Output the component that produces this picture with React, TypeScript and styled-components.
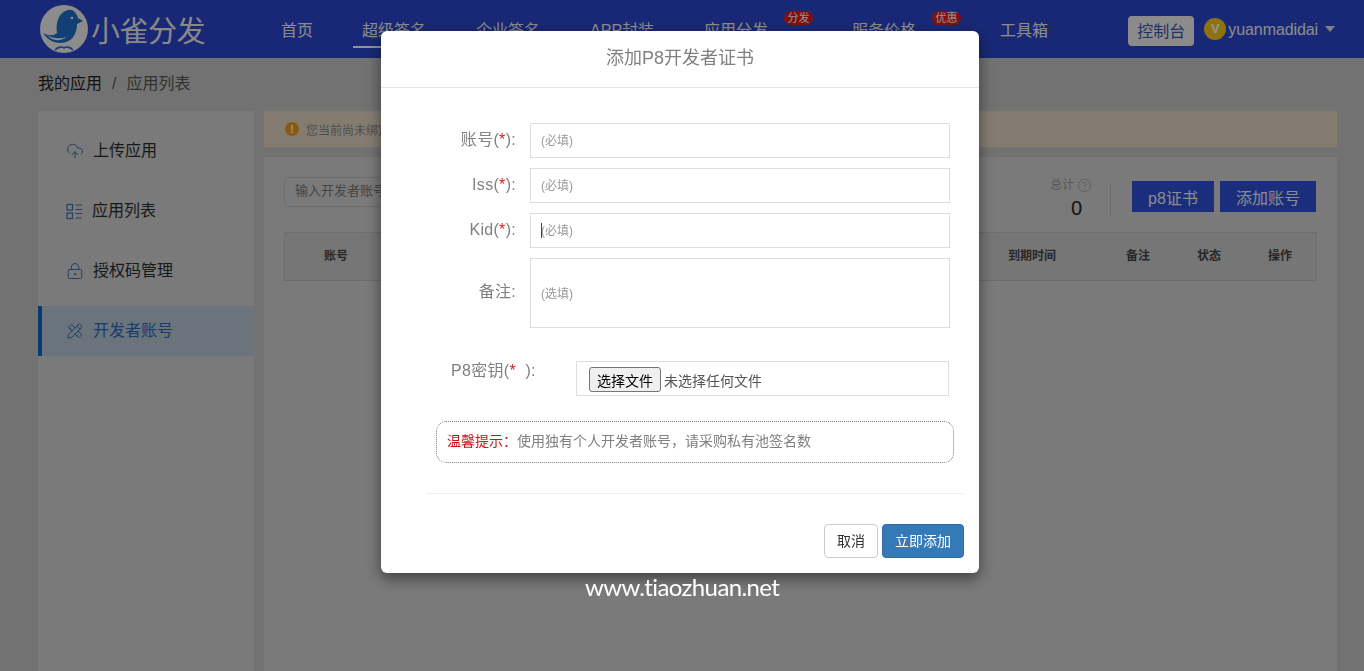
import * as React from 'react';
import styled, { createGlobalStyle } from 'styled-components';
import { CloudUpload, LockKeyhole, CircleHelp } from 'lucide-react';
import { TbTools } from 'react-icons/tb';

const sans = `"Liberation Sans", "Noto Sans CJK SC", sans-serif`;

const GlobalStyle = createGlobalStyle`
  html, body {
    margin: 0;
    height: 100%;
    overflow: hidden;
    background: #c4c4c4;
    font-family: ${sans};
  }
  * { box-sizing: border-box; }
`;

const Header = styled.header`
  display: flex;
  align-items: center;
  height: 58px;
  padding: 0 29px 0 40px;
  background: #2b46cc;
  color: #fff;
`;

const Logo = styled.div`
  display: flex;
  align-items: center;
  gap: 3px;
  width: 241px;
`;

const LogoText = styled.span`
  font-size: 29px;
  letter-spacing: -0.5px;
  color: #eaeaea;
`;

const Nav = styled.nav`
  display: flex;
  align-items: center;
  height: 100%;
  flex: 1;
`;

const NavItem = styled.a<{ $gap: number; $active?: boolean }>`
  position: relative;
  height: 30px;
  margin: 4px -9px 0 ${(p) => p.$gap - 9}px;
  padding: 0 9px;
  font-size: 16px;
  line-height: 30px;
  color: #f2f2f2;
  box-shadow: ${(p) => (p.$active ? '0 2px 0 #fff' : 'none')};
`;

const NavBadge = styled.span`
  position: absolute;
  top: -5px;
  right: -36px;
  width: 29px;
  height: 14px;
  border-radius: 7px;
  background: #dc1c1c;
  color: #fff;
  font-size: 11px;
  line-height: 14px;
  text-align: center;
`;

const ConsoleButton = styled.button`
  width: 66px;
  height: 30px;
  margin-top: 3px;
  padding: 0 0 2px;
  border: 0;
  border-radius: 4px;
  background: #f0f0f0;
  color: #3d50a8;
  font: 16px ${sans};
`;

const UserBox = styled.div`
  display: flex;
  align-items: center;
  margin-left: 10px;
  font-size: 16px;
  line-height: 22px;
  color: #f0f0f0;
`;

const Avatar = styled.span`
  display: flex;
  align-items: center;
  justify-content: center;
  width: 22px;
  height: 22px;
  margin-right: 2px;
  border-radius: 50%;
  background: #f5c518;
  color: #fff;
  font-size: 13px;
  font-weight: 700;
`;

const UserName = styled.span`
  padding-top: 2px;
  letter-spacing: -0.1px;
`;

const Caret = styled.span`
  width: 0;
  height: 0;
  margin-left: 7px;
  border-left: 5.5px solid transparent;
  border-right: 5.5px solid transparent;
  border-top: 6px solid #ddd;
`;

const Crumbs = styled.div`
  display: flex;
  align-items: center;
  gap: 10px;
  height: 53px;
  padding: 0 0 2px 38px;
  font-size: 16px;
  line-height: 22px;
  color: #555;
`;

const CrumbRoot = styled.span`
  color: #222;
`;

const Main = styled.main`
  display: flex;
  gap: 10px;
  height: 560px;
  padding: 0 27px 0 38px;
`;

const Sidebar = styled.aside`
  display: flex;
  flex-direction: column;
  gap: 10px;
  width: 216px;
  padding-top: 15px;
  background: #d2d2d2;
`;

const SideItem = styled.div<{ $active?: boolean }>`
  display: flex;
  align-items: center;
  gap: 9px;
  height: 50px;
  padding-left: ${(p) => (p.$active ? '24px' : '28px')};
  font-size: 16px;
  line-height: 22px;
  color: ${(p) => (p.$active ? '#2a69b8' : '#2c2c2c')};
  background: ${(p) => (p.$active ? '#b8c6d8' : 'transparent')};
  border-left: ${(p) => (p.$active ? '4px solid #0f62c4' : '0')};
  svg { color: #3f6da8; flex: none; }
`;

const Content = styled.section`
  display: flex;
  flex-direction: column;
  gap: 10px;
  flex: 1;
`;

const Notice = styled.div`
  display: flex;
  align-items: center;
  gap: 7px;
  height: 36px;
  padding-left: 21px;
  background: #e4d6c2;
  color: #888;
  font-size: 12px;
`;

const NoticeDot = styled.span`
  width: 14px;
  height: 14px;
  border-radius: 50%;
  background: #ec9a1e;
  color: #fff;
  font-size: 11px;
  font-weight: 700;
  line-height: 14px;
  text-align: center;
`;

const Card = styled.div`
  flex: 1;
  padding: 20px;
  background: #d2d2d2;
`;

const Toolbar = styled.div`
  display: flex;
  justify-content: space-between;
  height: 55px;
`;

const SearchBox = styled.div`
  width: 220px;
  height: 30px;
  padding-left: 10px;
  border: 1px solid #bdbdbd;
  border-radius: 4px;
  font-size: 13px;
  line-height: 25px;
  color: #777;
`;

const ToolbarRight = styled.div`
  display: flex;
  align-items: flex-start;
`;

const Stat = styled.div`
  display: flex;
  flex-direction: column;
  align-items: flex-end;
  gap: 3px;
  color: #999;
  font-size: 12px;
  line-height: 16px;
`;

const StatLabel = styled.span`
  display: flex;
  align-items: center;
  gap: 3px;
`;

const StatValue = styled.span`
  margin-right: 10px;
  font-size: 20px;
  line-height: 24px;
  color: #222;
`;

const Divider = styled.span`
  width: 1px;
  height: 32px;
  margin: 7px 21px 0 18px;
  background: #c0c0c0;
`;

const BlueButton = styled.button<{ $width: number }>`
  width: ${(p) => p.$width}px;
  height: 31px;
  margin: 4px 6px 0 0;
  padding: 0;
  border: 0;
  background: #2f4fd8;
  color: #f0f0f0;
  font: 16px ${sans};
  &:last-child { margin-right: 1px; }
`;

const TableHead = styled.div`
  display: grid;
  grid-template-columns: 102px 1fr 140px 72px 70px 72px;
  height: 49px;
  padding-bottom: 1px;
  align-items: center;
  border: 1px solid #bcbcbc;
  background: #cccccc;
  color: #444;
  font-size: 12px;
  line-height: 16px;
  font-weight: 700;
  text-align: center;
`;

const Overlay = styled.div`
  position: fixed;
  inset: 0;
  background: rgba(0, 0, 0, 0.42);
  padding: 31px 0 0 381px;
`;

const Modal = styled.div`
  width: 598px;
  height: 542px;
  border-radius: 6px;
  background: #fff;
  box-shadow: 0 5px 15px rgba(0, 0, 0, 0.5);
`;

const ModalTitle = styled.h4`
  height: 57px;
  margin: 0;
  border-bottom: 1px solid #e5e5e5;
  font-size: 18px;
  font-weight: 400;
  line-height: 54px;
  text-align: center;
  color: #808080;
`;

const ModalBody = styled.div`
  padding: 35px 15px 15px 45px;
`;

const Row = styled.div`
  position: relative;
  display: flex;
  align-items: center;
  margin-bottom: 10px;
`;

const RowLabel = styled.label`
  width: 90px;
  margin-right: 14px;
  padding-bottom: 2px;
  text-align: right;
  font-size: 16px;
  line-height: 20px;
  letter-spacing: 0.3px;
  color: #808080;
`;

const Star = styled.span`
  color: #d62020;
`;

const TextInput = styled.input`
  width: 420px;
  height: 35px;
  padding: 0 10px;
  border: 1px solid #ddd;
  outline: none;
  font: 12px ${sans};
  &::placeholder { color: #999; }
`;

const InputCaret = styled.span`
  position: absolute;
  left: 115px;
  top: 10px;
  width: 1px;
  height: 15px;
  background: #444;
`;

const TextArea = styled.textarea`
  display: block;
  width: 420px;
  height: 70px;
  padding: 25px 10px 0;
  border: 1px solid #ddd;
  outline: none;
  resize: none;
  font: 12px ${sans};
  &::placeholder { color: #999; }
`;

const FileRow = styled.div`
  display: flex;
  align-items: flex-start;
  margin: 33px 0 0 25px;
`;

const FileLabel = styled.span`
  width: 125px;
  font-size: 16px;
  line-height: 20px;
  letter-spacing: 0.3px;
  color: #808080;
`;

const FileBox = styled.div`
  display: flex;
  align-items: center;
  gap: 3px;
  width: 373px;
  height: 35px;
  padding: 2px 0 0 12px;
  border: 1px solid #ddd;
  font-size: 14px;
  color: #555;
`;

const FileButton = styled.button`
  width: 72px;
  height: 25px;
  padding: 0;
  border: 1px solid #767676;
  border-radius: 3px;
  background: #efefef;
  color: #000;
  font: 14px ${sans};
`;

const Tip = styled.div`
  width: 518px;
  height: 42px;
  margin: 25px 0 0 10px;
  padding-left: 10px;
  border: 1px dotted #777;
  border-radius: 10px;
  font-size: 14px;
  line-height: 39px;
  color: #808080;
`;

const TipHead = styled.span`
  color: #c8161d;
`;

const Rule = styled.hr`
  margin: 30px 0;
  border: 0;
  border-top: 1px solid #eee;
`;

const Footer = styled.div`
  display: flex;
  justify-content: flex-end;
  gap: 4px;
`;

const CancelButton = styled.button`
  width: 54px;
  height: 34px;
  padding: 0 0 2px;
  border: 1px solid #ccc;
  border-radius: 4px;
  background: #fff;
  color: #333;
  font: 14px ${sans};
`;

const SubmitButton = styled.button`
  width: 82px;
  height: 34px;
  padding: 0 0 2px;
  border: 1px solid #2e6da4;
  border-radius: 4px;
  background: #337ab7;
  color: #fff;
  font: 14px ${sans};
`;

const Watermark = styled.div`
  position: absolute;
  left: 585px;
  top: 572px;
  font: 24px "Lato", sans-serif;
  letter-spacing: -0.6px;
  line-height: 30px;
  color: #fff;
`;

const BirdLogo = () => (
  <svg width="48" height="48" viewBox="0 0 48 48">
    <circle cx="24" cy="24" r="24" fill="#f2f2f2" />
    <path
      d="M43 16l-6 3C37 30 31 38 20 38 13 38 7 34 3 28c5 3 10 3 14 0C16 20 17 8 28 5c5-1 8 2 10 8z"
      fill="#1f6fc8"
    />
    <path d="M7 30c6 4 13 4 20 2-6 4-14 5-20-2z" fill="#f2f2f2" />
    <path d="M15 45c3-3 7-4 9-2 2-2 6-1 9 2" fill="none" stroke="#1f6fc8" strokeWidth="1.6" />
    <circle cx="32" cy="13" r="1.3" fill="#f2f2f2" />
  </svg>
);

const ListIcon = () => (
  <svg width="17" height="17" viewBox="0 0 17 17" fill="none" stroke="currentColor" strokeWidth="1.2">
    <rect x="1" y="1.5" width="5.5" height="5.5" />
    <rect x="1" y="10" width="5.5" height="5.5" />
    <path d="M9.5 2h6.5M9.5 6.5h6.5M9.5 10.5h6.5M9.5 15h6.5" />
  </svg>
);

const navItems = [
  { label: '首页', gap: 0 },
  { label: '超级签名', gap: 49, active: true },
  { label: '企业签名', gap: 50 },
  { label: 'APP封装', gap: 50 },
  { label: '应用分发', gap: 50, badge: '分发' },
  { label: '服务价格', gap: 84, badge: '优惠' },
  { label: '工具箱', gap: 84 },
];

const fields = [
  { label: '账号', name: 'account' },
  { label: 'Iss', name: 'iss' },
  { label: 'Kid', name: 'kid', focus: true },
];

export default function App(): React.JSX.Element {
  return (
    <>
      <GlobalStyle />
      <Header>
        <Logo>
          <BirdLogo />
          <LogoText>小雀分发</LogoText>
        </Logo>
        <Nav>
          {navItems.map((item) => (
            <NavItem key={item.label} $gap={item.gap} $active={item.active}>
              {item.label}
              {item.badge && <NavBadge>{item.badge}</NavBadge>}
            </NavItem>
          ))}
        </Nav>
        <ConsoleButton>控制台</ConsoleButton>
        <UserBox>
          <Avatar>V</Avatar>
          <UserName>yuanmadidai</UserName>
          <Caret />
        </UserBox>
      </Header>
      <Crumbs>
        <CrumbRoot>我的应用</CrumbRoot>
        <span>/</span>
        <span>应用列表</span>
      </Crumbs>
      <Main>
        <Sidebar>
          <SideItem><CloudUpload size={18} strokeWidth={1.3} />上传应用</SideItem>
          <SideItem><ListIcon />应用列表</SideItem>
          <SideItem><LockKeyhole size={18} strokeWidth={1.3} />授权码管理</SideItem>
          <SideItem $active><TbTools size={18} strokeWidth={1.3} />开发者账号</SideItem>
        </Sidebar>
        <Content>
          <Notice>
            <NoticeDot>!</NoticeDot>
            您当前尚未绑定开发者账号
          </Notice>
          <Card>
            <Toolbar>
              <SearchBox>输入开发者账号</SearchBox>
              <ToolbarRight>
                <Stat>
                  <StatLabel>总计 <CircleHelp size={15} strokeWidth={1.2} /></StatLabel>
                  <StatValue>0</StatValue>
                </Stat>
                <Divider />
                <BlueButton $width={82}>p8证书</BlueButton>
                <BlueButton $width={96}>添加账号</BlueButton>
              </ToolbarRight>
            </Toolbar>
            <TableHead>
              <span>账号</span>
              <span />
              <span>到期时间</span>
              <span>备注</span>
              <span>状态</span>
              <span>操作</span>
            </TableHead>
          </Card>
        </Content>
      </Main>
      <Overlay>
        <Modal>
          <ModalTitle>添加P8开发者证书</ModalTitle>
          <ModalBody>
            {fields.map((field) => (
              <Row key={field.name}>
                <RowLabel>{field.label}(<Star>*</Star>):</RowLabel>
                <TextInput placeholder="(必填)" />
                {field.focus && <InputCaret />}
              </Row>
            ))}
            <Row>
              <RowLabel>备注:</RowLabel>
              <TextArea placeholder="(选填)" />
            </Row>
            <FileRow>
              <FileLabel>P8密钥(<Star>*</Star>&nbsp;&nbsp;):</FileLabel>
              <FileBox>
                <FileButton>选择文件</FileButton>
                未选择任何文件
              </FileBox>
            </FileRow>
            <Tip>
              <TipHead>温馨提示：</TipHead>使用独有个人开发者账号，请采购私有池签名数
            </Tip>
            <Rule />
            <Footer>
              <CancelButton>取消</CancelButton>
              <SubmitButton>立即添加</SubmitButton>
            </Footer>
          </ModalBody>
        </Modal>
        <Watermark>www.tiaozhuan.net</Watermark>
      </Overlay>
    </>
  );
}
